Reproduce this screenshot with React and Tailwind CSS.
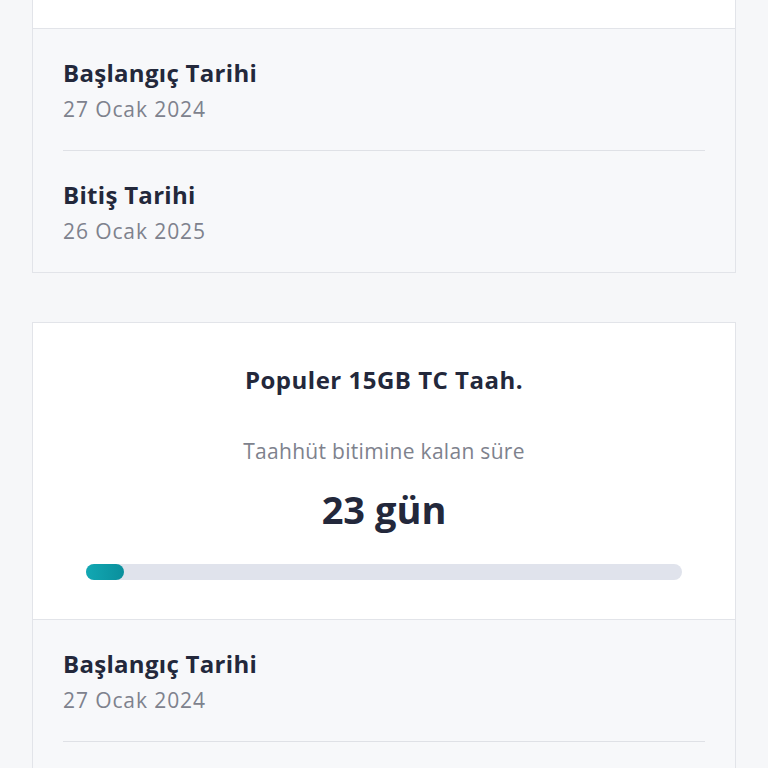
export default function App() {
  const rows = [
    { label: "Başlangıç Tarihi", value: "27 Ocak 2024" },
    { label: "Bitiş Tarihi", value: "26 Ocak 2025" },
  ];

  const DateRows = () => (
    <div className="bg-[#f7f8fa] px-[30px]">
      {rows.map((r, i) => (
        <div
          key={r.label}
          className={`pt-7 pb-[27px] ${i > 0 ? "border-t border-[#dfe1e6]" : ""}`}
        >
          <p className="text-[24px] leading-[32px] font-bold tracking-[0.3px] text-[#23283b]">
            {r.label}
          </p>
          <p className="mt-[6px] text-[21px] leading-[28px] tracking-[0.9px] text-[#7e828d]">
            {r.value}
          </p>
        </div>
      ))}
    </div>
  );

  return (
    <div
      className="h-screen bg-[#f6f7f9] px-8 overflow-hidden"
      style={{ fontFamily: "'Open Sans', 'Noto Sans', sans-serif" }}
    >
      <div className="border border-t-0 border-[#e2e4e9] bg-white">
        <div className="h-[29px] bg-white border-b border-[#e2e4e9]" />
        <DateRows />
      </div>

      <div className="mt-[49px] border border-[#e2e4e9] bg-white">
        <div className="bg-white border-b border-[#e2e4e9] px-[53px] pt-[41px] pb-[39px] flex flex-col items-center">
          <p className="text-[24px] leading-[32px] font-bold tracking-[0.5px] text-[#23283b]">
            Populer 15GB TC Taah.
          </p>
          <p className="mt-[41px] text-[21px] leading-[28px] tracking-[0.3px] text-[#7e828d]">
            Taahhüt bitimine kalan süre
          </p>
          <p className="mt-[20px] text-[38px] leading-[48px] font-bold text-[#23283b]">
            23 gün
          </p>
          <div className="mt-[31px] w-full h-4 rounded-full bg-[#e0e3ec]">
            <div
              className="h-4 rounded-full bg-gradient-to-r from-[#12a8b3] to-[#0a8f9c]"
              style={{ width: 38 }}
            />
          </div>
        </div>
        <DateRows />
      </div>
    </div>
  );
}
